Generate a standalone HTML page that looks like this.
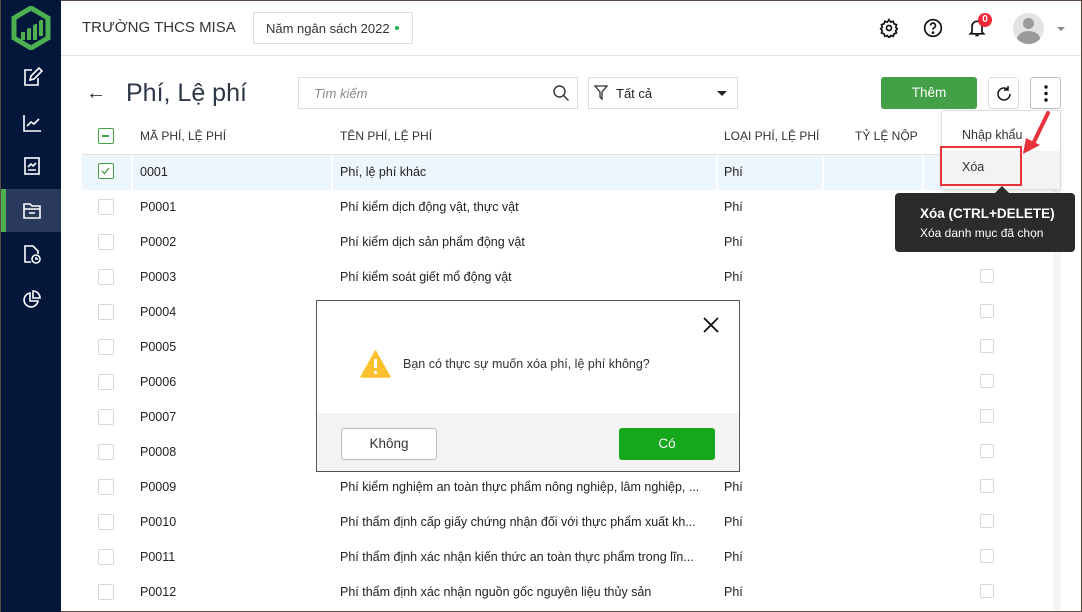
<!DOCTYPE html>
<html><head><meta charset="utf-8"><style>
*{box-sizing:border-box;margin:0;padding:0}
body{width:1082px;height:612px;overflow:hidden;background:#fff;font-family:"Liberation Sans",Arial,sans-serif;color:#1f2937;position:relative;font-size:13px}
.abs{position:absolute}
.side{left:0;top:0;width:61px;height:612px;background:#03173b;border-left:1px solid #5a4a44}
.ic{position:absolute;left:20px;width:22px;height:22px}
.cb{position:absolute;width:16px;height:16px;border:1px solid #d8d8d8;border-radius:2px;background:#fff}
.row{position:absolute;left:82px;width:970px;height:35px}
.t{position:absolute;top:10px;font-size:12.5px;color:#222;white-space:nowrap}
</style></head><body>
<div class="abs" style="left:0;top:0;width:1082px;height:1px;background:#5a4a44"></div>
<div class="abs" style="right:0;top:0;width:1px;height:612px;background:#5a4a44"></div>
<div class="abs" style="left:0;bottom:0;width:1082px;height:1px;background:#5a4a44"></div>
<div class="abs side">
 <svg class="abs" style="left:10px;top:6px" width="40" height="44" viewBox="0 0 40 44"><path d="M20 2 L37 12 V32 L20 42 L3 32 V12 Z" fill="none" stroke="#4caf50" stroke-width="5"/><path d="M12 34 V26 M18 34 V22 M24 34 V18 M30 30 V14" stroke="#4caf50" stroke-width="4"/><path d="M9 26 L20 20 L31 12" stroke="#03173b" stroke-width="1.5" fill="none"/></svg>
 <svg class="ic" style="top:66px" viewBox="0 0 22 22" fill="none" stroke="#fff" stroke-width="1.6"><path d="M11 4H4v15h13v-7"/><path d="M9 14l1-4 8-8 3 3-8 8z"/></svg>
 <svg class="ic" style="top:112px" viewBox="0 0 22 22" fill="none" stroke="#fff" stroke-width="1.6"><path d="M3 3v16h17"/><path d="M6 14l4-4 3 2 5-5"/></svg>
 <svg class="ic" style="top:155px" viewBox="0 0 22 22" fill="none" stroke="#fff" stroke-width="1.6"><rect x="4" y="3" width="14" height="16"/><path d="M7 12l3-3 2 2 3-3M7 15h8"/></svg>
 <div class="abs" style="left:0;top:189px;width:60px;height:43px;background:#2a3a5c;border-left:5px solid #4caf50"></div>
 <svg class="ic" style="top:199px" viewBox="0 0 22 22" fill="none" stroke="#fff" stroke-width="1.6"><path d="M3 5h6l2 2h8v12H3z"/><path d="M3 10h16M8 14h6"/></svg>
 <svg class="ic" style="top:243px" viewBox="0 0 22 22" fill="none" stroke="#fff" stroke-width="1.6"><path d="M10 19H4V3h8l5 5v3"/><circle cx="15" cy="16" r="4"/><path d="M15 14v2h2"/></svg>
 <svg class="ic" style="top:288px" viewBox="0 0 22 22" fill="none" stroke="#fff" stroke-width="1.6"><path d="M9 5a7 7 0 1 0 8 8H9z"/><path d="M12 3v7h7a7 7 0 0 0-7-7z"/></svg>
</div>
<div class="abs" style="left:61px;top:55px;width:1020px;height:1px;background:#e2e2e2"></div>
<div class="abs" style="left:82px;top:19px;font-size:15px;color:#333">TRƯỜNG THCS MISA</div>
<div class="abs" style="left:253px;top:12px;width:160px;height:32px;border:1px solid #ddd;padding:8px 12px;font-size:13px;color:#333;white-space:nowrap">Năm ngân sách 2022 <span style="display:inline-block;width:4px;height:4px;border-radius:2px;background:#22b14c;vertical-align:3px;margin-left:2px"></span></div>
<svg class="abs" style="left:879px;top:18px" width="20" height="20" viewBox="0 0 24 24" fill="none" stroke="#111" stroke-width="2"><circle cx="12" cy="12" r="3"/><path d="M12 2l2 3 3-1 1 3 3 1-1 3 2 2-2 2 1 3-3 1-1 3-3-1-2 3-2-3-3 1-1-3-3-1 1-3-2-2 2-2-1-3 3-1 1-3 3 1z"/></svg>
<svg class="abs" style="left:923px;top:18px" width="20" height="20" viewBox="0 0 24 24" fill="none" stroke="#111" stroke-width="2"><circle cx="12" cy="12" r="10"/><path d="M9 9a3 3 0 1 1 4 3c-1 .5-1 1-1 2"/><circle cx="12" cy="17.5" r=".6" fill="#111"/></svg>
<svg class="abs" style="left:967px;top:18px" width="20" height="20" viewBox="0 0 24 24" fill="none" stroke="#111" stroke-width="2"><path d="M6 17V10a6 6 0 0 1 12 0v7l2 2H4z"/><path d="M10 21h4"/></svg>
<div class="abs" style="left:978px;top:13px;width:14px;height:14px;border-radius:7px;background:#f0283c;color:#fff;font-size:10px;text-align:center;line-height:14px;font-weight:bold">0</div>
<div class="abs" style="left:1013px;top:13px;width:31px;height:31px;border-radius:50%;background:#e3e3e3;overflow:hidden"><div class="abs" style="left:10px;top:5px;width:11px;height:11px;border-radius:50%;background:#9a9a9a"></div><div class="abs" style="left:4px;top:18px;width:23px;height:16px;border-radius:50% 50% 0 0;background:#9a9a9a"></div></div>
<div class="abs" style="left:1057px;top:27px;border:4px solid transparent;border-top:4px solid #888"></div>

<div class="abs" style="left:86px;top:82px;font-size:20px;color:#333">←</div>
<div class="abs" style="left:126px;top:79px;font-size:25px;color:#2d3748">Phí, Lệ phí</div>
<div class="abs" style="left:298px;top:77px;width:280px;height:32px;border:1px solid #ddd;padding:8px 15px;font-style:italic;color:#888">Tìm kiếm</div>
<svg class="abs" style="left:552px;top:84px" width="18" height="18" viewBox="0 0 18 18" fill="none" stroke="#333" stroke-width="1.4"><circle cx="7.5" cy="7.5" r="5.5"/><path d="M11.5 11.5l5 5"/></svg>
<div class="abs" style="left:588px;top:77px;width:150px;height:32px;border:1px solid #ddd;padding:8px 0 0 27px;color:#222">Tất cả</div>
<svg class="abs" style="left:594px;top:85px" width="14" height="16" viewBox="0 0 14 16" fill="none" stroke="#333" stroke-width="1.3"><path d="M1 1h12L8 7v7l-2-2V7z"/></svg>
<div class="abs" style="left:717px;top:91px;border:5px solid transparent;border-top:5px solid #222"></div>
<div class="abs" style="left:881px;top:77px;width:96px;height:32px;background:#43a047;border-radius:3px;color:#fff;text-align:center;line-height:32px;font-size:13.5px">Thêm</div>
<div class="abs" style="left:988px;top:77px;width:31px;height:32px;border:1px solid #ddd;border-radius:3px"></div>
<svg class="abs" style="left:995px;top:85px" width="18" height="18" viewBox="0 0 18 18" fill="none" stroke="#111" stroke-width="1.5"><path d="M15 9a6 6 0 1 1-2-4.5"/><path d="M13 1v4h-4"/></svg>
<div class="abs" style="left:1030px;top:77px;width:31px;height:32px;border:1px solid #bbb;border-radius:3px"><svg class="abs" style="left:13px;top:7px" width="4" height="17"><circle cx="2" cy="2" r="1.7" fill="#111"/><circle cx="2" cy="8.5" r="1.7" fill="#111"/><circle cx="2" cy="15" r="1.7" fill="#111"/></svg></div>

<div class="abs" style="left:82px;top:154px;width:970px;height:1px;background:#e2e2e2"></div>
<div class="cb" style="left:98px;top:128px;border:1.5px solid #43a047"><div class="abs" style="left:3px;top:6px;width:7px;height:1.5px;background:#43a047"></div></div>
<div class="abs" style="left:140px;top:129px;font-size:12px;color:#333">MÃ PHÍ, LỆ PHÍ</div>
<div class="abs" style="left:340px;top:129px;font-size:12px;color:#333">TÊN PHÍ, LỆ PHÍ</div>
<div class="abs" style="left:724px;top:129px;font-size:12px;color:#333">LOẠI PHÍ, LỆ PHÍ</div>
<div class="abs" style="left:855px;top:129px;font-size:12px;color:#333">TỶ LỆ NỘP</div>
<div class="abs" style="left:1053px;top:110px;width:8px;height:500px;background:#f5f5f5"></div>

<div class="row" style="top:155px;background:#eef6fd">
 <div class="abs" style="left:49px;top:0;width:2px;height:35px;background:#fff"></div><div class="abs" style="left:249px;top:0;width:2px;height:35px;background:#fff"></div><div class="abs" style="left:634px;top:0;width:2px;height:35px;background:#fff"></div><div class="abs" style="left:740px;top:0;width:2px;height:35px;background:#fff"></div><div class="abs" style="left:840px;top:0;width:2px;height:35px;background:#fff"></div>
 <div class="cb" style="left:16px;top:8px;border:1.5px solid #43a047"><svg width="13" height="13" viewBox="0 0 13 13" style="position:absolute;left:0;top:0"><path d="M3 7l2.5 2.5L10 4" stroke="#43a047" stroke-width="1.3" fill="none"/></svg></div>
 <div class="t" style="left:58px">0001</div><div class="t" style="left:258px">Phí, lệ phí khác</div><div class="t" style="left:642px">Phí</div>
</div>
<div class="row" style="top:190px"><div class="cb" style="left:16px;top:9px"></div><div class="t" style="left:58px">P0001</div><div class="t" style="left:258px">Phí kiểm dịch động vật, thực vật</div><div class="t" style="left:642px">Phí</div></div>
<div class="row" style="top:225px"><div class="cb" style="left:16px;top:9px"></div><div class="t" style="left:58px">P0002</div><div class="t" style="left:258px">Phí kiểm dịch sản phẩm động vật</div><div class="t" style="left:642px">Phí</div></div>
<div class="row" style="top:260px"><div class="cb" style="left:16px;top:9px"></div><div class="t" style="left:58px">P0003</div><div class="t" style="left:258px">Phí kiểm soát giết mổ động vật</div><div class="t" style="left:642px">Phí</div><div class="cb" style="left:898px;top:9px;width:14px;height:14px"></div></div>
<div class="row" style="top:295px"><div class="cb" style="left:16px;top:9px"></div><div class="t" style="left:58px">P0004</div><div class="cb" style="left:898px;top:9px;width:14px;height:14px"></div></div>
<div class="row" style="top:330px"><div class="cb" style="left:16px;top:9px"></div><div class="t" style="left:58px">P0005</div><div class="cb" style="left:898px;top:9px;width:14px;height:14px"></div></div>
<div class="row" style="top:365px"><div class="cb" style="left:16px;top:9px"></div><div class="t" style="left:58px">P0006</div><div class="cb" style="left:898px;top:9px;width:14px;height:14px"></div></div>
<div class="row" style="top:400px"><div class="cb" style="left:16px;top:9px"></div><div class="t" style="left:58px">P0007</div><div class="cb" style="left:898px;top:9px;width:14px;height:14px"></div></div>
<div class="row" style="top:435px"><div class="cb" style="left:16px;top:9px"></div><div class="t" style="left:58px">P0008</div><div class="cb" style="left:898px;top:9px;width:14px;height:14px"></div></div>
<div class="row" style="top:470px"><div class="cb" style="left:16px;top:9px"></div><div class="t" style="left:58px">P0009</div><div class="t" style="left:258px">Phí kiểm nghiệm an toàn thực phẩm nông nghiệp, lâm nghiệp, ...</div><div class="t" style="left:642px">Phí</div><div class="cb" style="left:898px;top:9px;width:14px;height:14px"></div></div>
<div class="row" style="top:505px"><div class="cb" style="left:16px;top:9px"></div><div class="t" style="left:58px">P0010</div><div class="t" style="left:258px">Phí thẩm định cấp giấy chứng nhận đối với thực phẩm xuất kh...</div><div class="t" style="left:642px">Phí</div><div class="cb" style="left:898px;top:9px;width:14px;height:14px"></div></div>
<div class="row" style="top:540px"><div class="cb" style="left:16px;top:9px"></div><div class="t" style="left:58px">P0011</div><div class="t" style="left:258px">Phí thẩm định xác nhận kiến thức an toàn thực phẩm trong lĩn...</div><div class="t" style="left:642px">Phí</div><div class="cb" style="left:898px;top:9px;width:14px;height:14px"></div></div>
<div class="row" style="top:575px"><div class="cb" style="left:16px;top:9px"></div><div class="t" style="left:58px">P0012</div><div class="t" style="left:258px">Phí thẩm định xác nhận nguồn gốc nguyên liệu thủy sản</div><div class="t" style="left:642px">Phí</div><div class="cb" style="left:898px;top:9px;width:14px;height:14px"></div></div>

<div class="abs" style="left:941px;top:110px;width:120px;height:80px;background:#fff;border:1px solid #ddd;border-radius:3px;box-shadow:0 2px 4px rgba(0,0,0,.1)">
 <div class="abs" style="left:20px;top:17px;color:#333;font-size:12.5px">Nhập khẩu</div>
 <div class="abs" style="left:0;top:40px;width:118px;height:38px;background:#f3f3f3"></div>
 <div class="abs" style="left:20px;top:49px;color:#333;font-size:12.5px">Xóa</div>
</div>
<div class="abs" style="left:940px;top:146px;width:82px;height:40px;border:2.5px solid #e8333c"></div>
<svg class="abs" style="left:1010px;top:108px" width="45" height="55" viewBox="0 0 45 55"><path d="M38 5 L22 38" stroke="#e8333c" stroke-width="4" stroke-linecap="round"/><path d="M13 46 L16 30 L30 37 Z" fill="#e8333c"/></svg>
<div class="abs" style="left:995px;top:186px;border:7px solid transparent;border-bottom:7px solid #2b2b2b;border-top:0"></div>
<div class="abs" style="left:895px;top:193px;width:180px;height:59px;background:#2b2b2b;border-radius:4px;color:#fff;padding:13px 0 0 25px">
 <div style="font-weight:bold;font-size:13.5px">Xóa (CTRL+DELETE)</div>
 <div style="font-size:12px;margin-top:5px">Xóa danh mục đã chọn</div>
</div>

<div class="abs" style="left:316px;top:300px;width:424px;height:172px;background:#fff;border:1px solid #555">
 <svg class="abs" style="left:386px;top:16px" width="16" height="16" viewBox="0 0 16 16" stroke="#111" stroke-width="1.8"><path d="M1 1l14 14M15 1L1 15"/></svg>
 <svg class="abs" style="left:43px;top:49px" width="31" height="28" viewBox="0 0 31 28"><path d="M15.5 1 L30 27 H1 Z" fill="#fbc02d" stroke="#fbc02d" stroke-linejoin="round" stroke-width="1.5"/><path d="M15.5 9v9" stroke="#fff" stroke-width="3"/><circle cx="15.5" cy="22.5" r="1.6" fill="#fff"/></svg>
 <div class="abs" style="left:86px;top:56px;color:#333;font-size:12.5px">Bạn có thực sự muốn xóa phí, lệ phí không?</div>
 <div class="abs" style="left:0;top:112px;width:422px;height:58px;background:#f3f3f3"></div>
 <div class="abs" style="left:24px;top:127px;width:96px;height:32px;background:#fff;border:1px solid #bbb;border-radius:3px;text-align:center;line-height:30px;font-size:13.5px;color:#333">Không</div>
 <div class="abs" style="left:302px;top:127px;width:96px;height:32px;background:#16a81c;border-radius:3px;text-align:center;line-height:32px;font-size:13.5px;color:#fff">Có</div>
</div>
</body></html>
